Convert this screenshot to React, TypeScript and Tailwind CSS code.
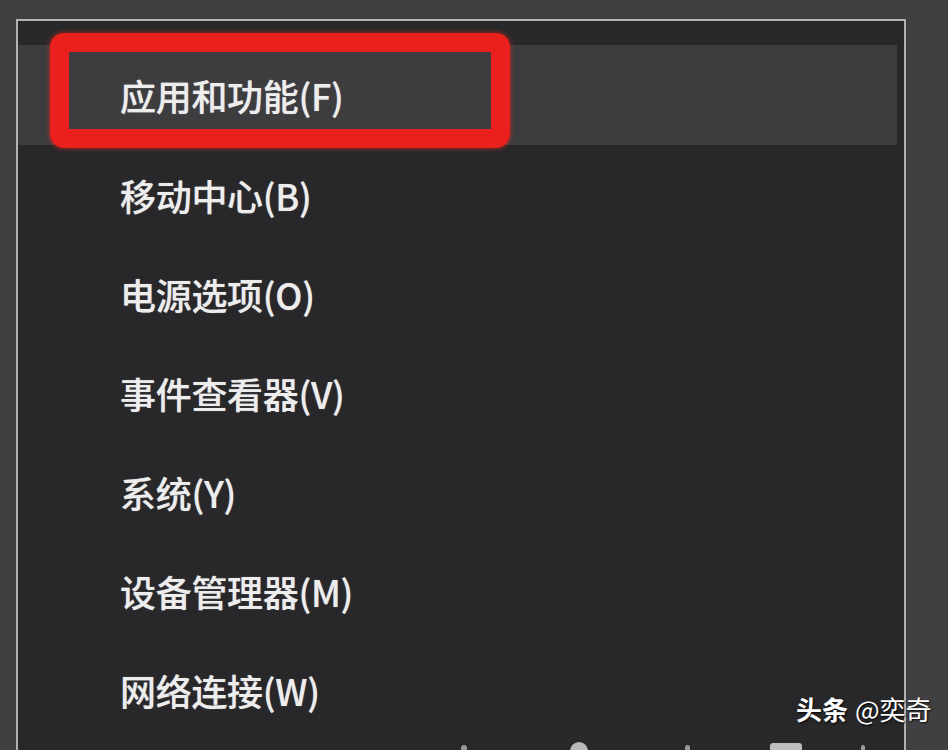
import React from "react";

const items = [
  "应用和功能(F)",
  "移动中心(B)",
  "电源选项(O)",
  "事件查看器(V)",
  "系统(Y)",
  "设备管理器(M)",
  "网络连接(W)",
];

export default function App() {
  return (
    <div
      className="relative w-[948px] h-[750px] overflow-hidden bg-[#404042]"
      style={{ fontFamily: '"Noto Sans CJK SC", "Noto Sans", sans-serif' }}
    >
      <div className="relative ml-[16px] mt-[19px] w-[890px] h-[731px] border-2 border-b-0 border-[#b2b2b4] bg-[#28282a] pt-[24px] pr-[7px]">
        {items.map((t, i) => (
          <div
            key={t}
            className={
              "flex items-center pl-[102px] text-[36px] font-medium leading-none text-[#ededed] [text-shadow:0_0_1px_rgba(255,255,255,0.5)] " +
              (i === 0 ? "h-[100px] bg-[#3d3d3f]" : "h-[99px]")
            }
          >
            <span className="tracking-[-0.3px]">{t}</span>
          </div>
        ))}
        <div className="flex items-end h-[12px] pl-[443px]">
          <span className="w-[6px] h-[6px] rounded-t-full bg-[#9a9a9a]" />
          <span className="ml-[103px] w-[18px] h-[9px] rounded-t-full bg-[#b8b8b8]" />
          <span className="ml-[97px] w-[5px] h-[6px] rounded-t-full bg-[#9a9a9a]" />
          <span className="ml-[80px] w-[32px] h-[8px] rounded-t-[3px] bg-[#bdbdbd]" />
          <span className="ml-[59px] w-[4px] h-[6px] rounded-t-full bg-[#9a9a9a]" />
        </div>
        <div className="pointer-events-none absolute left-[32px] top-[12px] w-[460px] h-[115px] rounded-[14px] border-[19px] border-[#e9201b] shadow-[0_0_5px_rgba(255,40,30,0.7)]" />
      </div>
      <div className="absolute left-[796px] top-[696px] flex items-center gap-[7px] text-[26px] leading-none text-white [text-shadow:1px_1px_2px_rgba(0,0,0,0.9)]">
        <span className="font-bold">头条</span>
        <span>@奕奇</span>
      </div>
    </div>
  );
}
